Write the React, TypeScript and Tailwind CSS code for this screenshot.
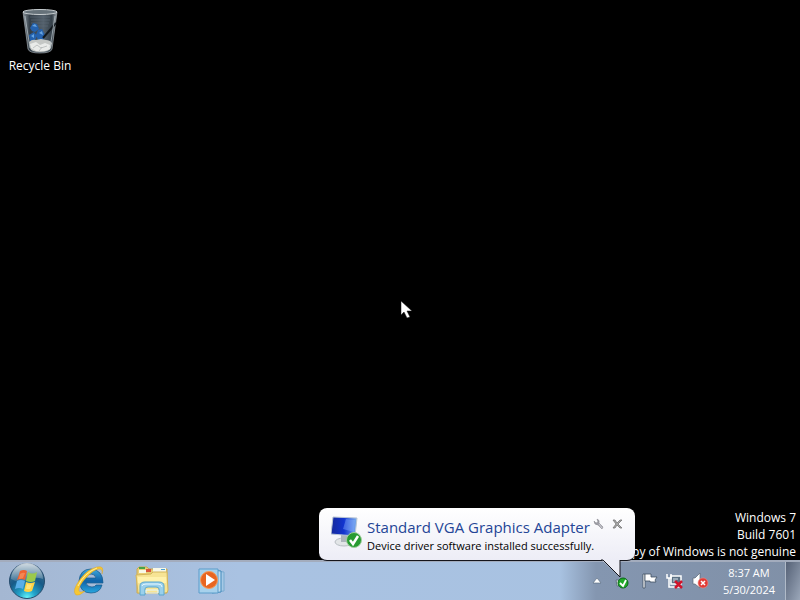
import React from "react";

function RecycleBinIcon() {
  return (
    <svg width="40" height="48" viewBox="0 0 40 48" aria-hidden="true">
      <defs>
        <linearGradient id="glass" x1="0" x2="1" y1="0" y2="0">
          <stop offset="0" stopColor="#8b959c" />
          <stop offset=".2" stopColor="#323d47" />
          <stop offset=".6" stopColor="#53606b" />
          <stop offset=".85" stopColor="#343f48" />
          <stop offset="1" stopColor="#a5adb2" />
        </linearGradient>
      </defs>
      <path d="M3 4L8 41Q9 45 20 45Q31 45 32 41L37 4Z" fill="url(#glass)" stroke="#9da5aa" strokeWidth=".7" />
      <path d="M10 9h20M11 12h19M11 15h18M12 18h16" stroke="#5e6d78" strokeWidth=".6" />
      <path d="M10 20l3-5 4 1 2 5-4 3-3-1zM9 27l5-3 3 4-2 4-5 1zM18 22l4-1 3 6-2 6-5-1-2-5z" fill="#2461ad" />
      <path d="M12 18l3-2 2 3zM19 25l3-2 1 4zM11 28l3-2v4z" fill="#68a5e2" />
      <path d="M23 30L36 15" stroke="#12181d" strokeWidth="2" />
      <path d="M9 34q3-3 7-2l5-1 5 1q4 0 6 3l-1 5q-2 4-11 4T10 40z" fill="#c4c7c5" />
      <path d="M10 36l6-2 4 3 5-2 5 2v4l-5 2h-9l-5-3z" fill="#e9ebe9" />
      <path d="M13 40l4-3 4 3 6-2M19 43l3-4" stroke="#aeb2b1" strokeWidth=".7" fill="none" />
      <ellipse cx="20" cy="4" rx="17" ry="2.5" fill="#66727a" stroke="#c8ced1" />
      <path d="M5 8L10 40M35 8L30 40" stroke="#b4bfc5" strokeWidth="1" opacity=".75" />
    </svg>
  );
}

function StartOrb() {
  return (
    <svg width="38" height="38" viewBox="0 0 38 38" aria-hidden="true">
      <defs>
        <radialGradient id="orb" cx=".5" cy=".98" r=".95">
          <stop offset="0" stopColor="#67f7fa" />
          <stop offset=".25" stopColor="#22a5cb" />
          <stop offset=".6" stopColor="#175a87" />
          <stop offset="1" stopColor="#46718e" />
        </radialGradient>
        <linearGradient id="shine" x1="0" x2="0" y1="0" y2="1">
          <stop offset="0" stopColor="#fff" stopOpacity=".75" />
          <stop offset="1" stopColor="#fff" stopOpacity=".12" />
        </linearGradient>
      </defs>
      <circle cx="19" cy="19" r="17.5" fill="url(#orb)" stroke="#264c6d" />
      <path d="M3 17A16 16 0 0 1 35 17Q27 14 19 18T3 17" fill="url(#shine)" />
      <path d="M12 9q4-2 7 0l-2 9q-4-2-8 0 2-5 3-9z" fill="#ee6331" />
      <path d="M20 10q4 3 9 0l-2 9q-4 2-9 0z" fill="#9bc94b" />
      <path d="M9 19q4-2 8 0l-2 8q-4-2-8 0z" fill="#58aee8" />
      <path d="M18 20q4 2 9 0l-3 9q-4 2-8 0z" fill="#fed345" />
      <path d="M12 12q3-2 5-1l-2 5-4 1z" fill="#f7a06a" opacity=".6" />
      <path d="M19 22q3 1 5 0l-2 5h-4z" fill="#fff09b" opacity=".6" />
    </svg>
  );
}

function ExplorerE() {
  return (
    <svg width="32" height="32" viewBox="0 0 32 32" aria-hidden="true">
      <defs>
        <linearGradient id="ie" x1="0" x2="0" y1="0" y2="1">
          <stop offset="0" stopColor="#3fa9dd" />
          <stop offset=".5" stopColor="#0f62a8" />
          <stop offset="1" stopColor="#28a7df" />
        </linearGradient>
      </defs>
      <path d="M29 18H12q1 4 6 4 3 0 4-2h6q-2 8-11 8Q6 28 5 16 6 4 17 4q12 1 12 14zM12 13h10q-1-4-5-4-4 0-5 4" fill="url(#ie)" stroke="#175989" strokeWidth=".7" fillRule="evenodd" />
      <path d="M28 9Q31 0 23 2 14 4 7 13-3 26 2 30q4 1 9-4-5 2-6 0-1-4 6-12 9-10 14-10 4 0 3 5" fill="#f6c733" stroke="#d99f20" strokeWidth=".4" />
      <path d="M4 21Q10 8 23 3" stroke="#fff0a0" fill="none" />
    </svg>
  );
}

function FolderIcon() {
  return (
    <svg width="34" height="30" viewBox="0 0 34 30" aria-hidden="true">
      <path d="M2 3l2-2h8l2 2h18v24H2z" fill="#e8cf76" stroke="#c9aa55" />
      <path d="M4 1h6v2H4z" fill="#46a347" />
      <path d="M11 3h5v3h-5z" fill="#d9553b" />
      <path d="M18 2h13v4H18zM4 4h7v3H4z" fill="#f8f8e7" />
      <path d="M26 3h4v1h-4z" fill="#4ba1d3" />
      <path d="M1 9l15-1 2-2h14l1 18q0 3-3 3H3z" fill="#f7e494" stroke="#d4b65c" />
      <path d="M3 11h28v6H3z" fill="#fff2ad" />
      <path d="M5 29V20q0-4 5-4h14q5 0 5 4v9h-5v-6q0-2-3-2h-8q-3 0-3 2v6z" fill="#9ad0eb" stroke="#58a6cf" />
      <path d="M7 20q0-2 4-2h12q4 0 4 3M11 24h12v3H11z" stroke="#e6f8ff" fill="none" />
    </svg>
  );
}

function MediaPlayerIcon() {
  return (
    <svg width="30" height="28" viewBox="0 0 30 28" aria-hidden="true">
      <path d="M16 4l10 1v19l-10 1z" fill="#a6c9e6" stroke="#79abd0" />
      <path d="M14 3l9 1v21l-9 1z" fill="#c0dcf1" stroke="#4189ba" />
      <path d="M1 2h19v24H1z" fill="#a7d1ec" stroke="#5b9dcb" />
      <circle cx="11" cy="13" r="8.5" fill="#e86521" stroke="#f59a58" />
      <path d="M8 7v12l9-6z" fill="#fff" />
    </svg>
  );
}

function DeviceIcon() {
  return (
    <svg width="34" height="36" viewBox="0 0 34 36" aria-hidden="true">
      <defs>
        <linearGradient id="screen">
          <stop offset="0" stopColor="#15299b" />
          <stop offset=".5" stopColor="#1234d0" />
          <stop offset="1" stopColor="#7db1ef" />
        </linearGradient>
      </defs>
      <ellipse cx="13" cy="26" rx="9" ry="4" fill="#e2e5e7" stroke="#b8bec3" />
      <path d="M10 19h7v7h-7z" fill="#adb5bc" />
      <path d="M2 1l24 1-2 18-24-2z" fill="url(#screen)" stroke="#bac6d4" />
      <path d="M15 3l9 1-1 12-11-3z" fill="#89b1ff" opacity=".4" />
      <circle cx="23" cy="24" r="7.5" fill="#279b31" stroke="#a0ce9d" />
      <path d="M19 24l3 4 5-8" stroke="#fff" strokeWidth="2.5" fill="none" />
    </svg>
  );
}

function InstalledIcon() {
  return (
    <svg width="16" height="16" viewBox="0 0 16 16" aria-hidden="true">
      <path d="M2 7h3v6H3z" fill="#eee" stroke="#637087" />
      <circle cx="9" cy="10" r="5" fill="#20a929" stroke="#086917" />
      <path d="M6 10l3 3 3-6" stroke="#fff" strokeWidth="1.8" fill="none" />
    </svg>
  );
}

function FlagIcon() {
  return (
    <svg width="16" height="16" viewBox="0 0 16 16" aria-hidden="true">
      <path d="M1 1h2v14H1z" fill="#fff" stroke="#3f4f60" strokeWidth=".8" />
      <path d="M3 1h6v3h6l-2 3 1 2H8V8H3z" fill="#fff" stroke="#3f4f60" strokeWidth=".8" />
    </svg>
  );
}

function NetworkIcon() {
  return (
    <svg width="18" height="16" viewBox="0 0 18 16" aria-hidden="true">
      <path d="M5 3h10v8H5z" fill="#5b7083" stroke="#fff" strokeWidth="1.5" />
      <path d="M1 1v4h4V1M3 5v9h5M5 14h9" fill="none" stroke="#fff" strokeWidth="1.5" />
      <path d="M7 6h5M7 8h3" stroke="#dbe4ed" />
      <path d="M9 8l7 7M16 8l-7 7" stroke="#cf142b" strokeWidth="2.5" />
    </svg>
  );
}

function MutedIcon() {
  return (
    <svg width="18" height="16" viewBox="0 0 18 16" aria-hidden="true">
      <path d="M1 5h2l5-5v15l-5-4H1z" fill="#fff" stroke="#5d6976" strokeWidth=".7" />
      <circle cx="11" cy="10" r="5" fill="#e23a35" stroke="#f28b83" strokeWidth=".6" />
      <path d="M9 8l4 4m0-4l-4 4" stroke="#fff" strokeWidth="1.5" />
    </svg>
  );
}

function Balloon() {
  return (
    <aside role="status" className="absolute right-[165px] bottom-[39px] z-10 flex h-[53px] w-[316px] rounded-lg border-b border-[#15151c] bg-linear-to-b from-white to-[#ededf6] py-2 pl-3 text-black">
      <DeviceIcon />
      <div className="ml-0.5 flex-1 whitespace-nowrap">
        <h2 className="text-[15px] leading-[22px] text-[#244596]">Standard VGA Graphics Adapter</h2>
        <p className="text-[11px] leading-4">Device driver software installed successfully.</p>
      </div>
      <div className="absolute top-2.5 right-3 flex gap-2">
        <button type="button" aria-label="Notification settings">
          <svg width="11" height="12" viewBox="0 0 11 12" aria-hidden="true">
            <path d="M4 1q3 1 2 4l4 4-1 2-4-4Q1 7 1 3l2 2 2-1z" fill="#a0a0a8" stroke="#85858d" strokeWidth=".5" />
            <path d="M6 6l3 4" stroke="#d8d8de" strokeWidth=".8" />
          </svg>
        </button>
        <button type="button" aria-label="Close">
          <svg width="11" height="12" viewBox="0 0 11 12" aria-hidden="true">
            <path d="M1 2h2l2 3 3-3h2L6 6l4 4H8L5 7l-2 3H1l3-4z" fill="#aaa" stroke="#777" strokeWidth=".8" />
          </svg>
        </button>
      </div>
      <svg className="absolute top-[51px] right-3.5" width="20" height="19" viewBox="0 0 20 19" aria-hidden="true">
        <path d="M1 0H19V18L1 1Z" fill="#ededf6" />
        <path d="M0 1H2L19 18V1" fill="none" stroke="#15151c" />
      </svg>
    </aside>
  );
}

function Taskbar() {
  return (
    <footer className="flex h-10 items-center border-t-2 border-[#a3acbd] bg-linear-to-r from-[#a4b7d2] via-[#a9c2e2] via-30% to-[#a8c2e1]">
      <button type="button" aria-label="Start" className="ml-2"><StartOrb /></button>
      <nav aria-label="Pinned programs" className="ml-7 flex flex-1 items-center gap-[29px]">
        <button type="button" aria-label="Internet Explorer"><ExplorerE /></button>
        <button type="button" aria-label="Windows Explorer"><FolderIcon /></button>
        <button type="button" aria-label="Windows Media Player"><MediaPlayerIcon /></button>
      </nav>
      <div className="flex h-full w-60 items-center bg-linear-to-r from-[#a8c2e1] via-[#8496b0] via-15% to-[#8090a7]">
        <button type="button" aria-label="Show hidden icons" className="ml-8">
          <svg width="10" height="8" viewBox="0 0 10 8" aria-hidden="true">
            <path d="M1 6l4-5 4 5z" fill="#fff" stroke="#53647a" strokeWidth=".6" />
          </svg>
        </button>
        <div className="ml-3 flex flex-1 items-center gap-2">
          <button type="button" aria-label="Device installed"><InstalledIcon /></button>
          <button type="button" aria-label="Action Center" className="ml-1"><FlagIcon /></button>
          <button type="button" aria-label="Network disconnected"><NetworkIcon /></button>
          <button type="button" aria-label="Volume muted"><MutedIcon /></button>
        </div>
        <button type="button" aria-label="Date and time" className="mr-2.5 text-center text-[11px] leading-[17px] text-white">
          <time dateTime="2024-05-30T08:37" className="flex flex-col">
            <span>8:37 AM</span>
            <span>5/30/2024</span>
          </time>
        </button>
        <button type="button" aria-label="Show desktop" className="h-full w-[15px] border-l border-[#b0bac8] bg-linear-to-br from-[#566277] to-[#9ba7b9]" />
      </div>
    </footer>
  );
}

export default function App() {
  return (
    <div className="relative flex min-h-screen flex-col overflow-hidden bg-black font-['Open_Sans','Noto_Sans',sans-serif] text-white">
      <main className="flex flex-1 flex-col justify-between">
        <button type="button" className="mt-2 flex w-20 flex-col items-center text-[12px] leading-4">
          <RecycleBinIcon />
          <span className="mt-0.5">Recycle Bin</span>
        </button>
        <div className="self-end pr-1 text-right text-[12px] leading-[17px]">
          <p>Windows 7</p>
          <p>Build 7601</p>
          <p>This copy of Windows is not genuine</p>
        </div>
      </main>
      <svg className="absolute top-[300px] left-[400px]" width="13" height="20" viewBox="0 0 13 20" aria-hidden="true">
        <path d="M1 1v14l3-3 3 6 3-1-3-6h5z" fill="#fff" stroke="#111" strokeWidth=".5" />
      </svg>
      <Balloon />
      <Taskbar />
    </div>
  );
}
